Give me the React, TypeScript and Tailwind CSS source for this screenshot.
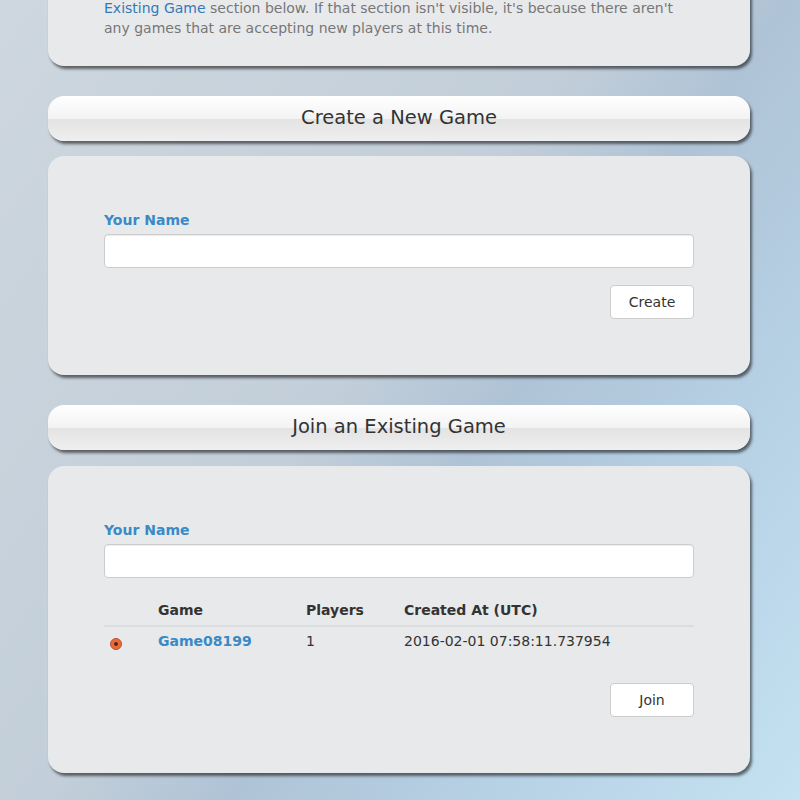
import React, { useState } from 'react';

const font = { fontFamily: '"DejaVu Sans", Verdana, sans-serif' };

const SectionHeader: React.FC<{ title: string }> = ({ title }) => (
  <div className="relative h-[45px] rounded-[16px] overflow-hidden shadow-[2px_3px_3px_rgba(0,0,0,0.55)] bg-[linear-gradient(to_bottom,#ffffff_0%,#f3f3f3_50%,#e3e3e3_51%,#efefef_100%)] flex items-center justify-center pb-[1px]">
    <h2 className="text-[19.5px] text-[#333] leading-none">{title}</h2>
  </div>
);

const Card: React.FC<{ children: React.ReactNode; className?: string }> = ({ children, className }) => (
  <div className={`bg-[#e8e9eb] rounded-[16px] shadow-[2px_3px_3px_rgba(0,0,0,0.55)] px-[56px] ${className || ''}`}>
    {children}
  </div>
);

const NameField: React.FC = () => (
  <div>
    <label className="block text-[14px] leading-[20px] font-bold text-[#3a8ac6] mb-[4px]">Your Name</label>
    <input
      type="text"
      className="block w-full h-[34px] bg-white border border-[#ccc] rounded-[4px] shadow-[inset_0_1px_1px_rgba(0,0,0,0.075)] px-3 text-[14px] outline-none"
    />
  </div>
);

const Button: React.FC<{ label: string }> = ({ label }) => (
  <button className="w-[84px] h-[34px] bg-white border border-[#ccc] rounded-[4px] text-[14px] text-[#333]">
    {label}
  </button>
);

const Radio: React.FC<{ checked: boolean }> = ({ checked }) => (
  <span className="inline-flex items-center justify-center w-[12px] h-[12px] rounded-full bg-[#e86b3c] border border-[#b9502b] mt-[3px]">
    {checked && <span className="w-[4px] h-[4px] rounded-full bg-[#5a2414]" />}
  </span>
);

export default function App() {
  const [selected] = useState('Game08199');
  const games = [{ name: 'Game08199', players: 1, created: '2016-02-01 07:58:11.737954' }];

  return (
    <div
      style={font}
      className="min-h-[800px] h-[800px] overflow-hidden bg-[linear-gradient(125deg,#ced7df_0%,#c2ced9_45%,#afc3d6_58%,#b6d0e4_76%,#c4e2f2_100%)] px-[48px] pr-[50px]"
    >
      <Card className="-mt-[40px] pt-[38px] pb-[28px]">
        <p className="text-[14px] leading-[20px] text-[#777] h-[40px]">
          <a className="text-[#337ab7]">Existing Game</a> section below. If that section isn't visible, it's because there aren't
          <br />
          any games that are accepting new players at this time.
        </p>
      </Card>

      <div className="mt-[30px]">
        <SectionHeader title="Create a New Game" />
      </div>
      <Card className="mt-[15px] pt-[54px] pb-[56px]">
        <NameField />
        <div className="flex justify-end mt-[17px]">
          <Button label="Create" />
        </div>
      </Card>

      <div className="mt-[30px]">
        <SectionHeader title="Join an Existing Game" />
      </div>
      <Card className="mt-[16px] pt-[54px] pb-[56px]">
        <NameField />
        <table className="w-full mt-[18px] text-[14px] leading-[20px] text-[#333] border-collapse">
          <thead>
            <tr className="border-b-2 border-[#dcdddf]">
              <th className="w-[54px] pt-1 pb-[5px]" />
              <th className="w-[148px] pt-1 pb-[5px] text-left font-bold">Game</th>
              <th className="w-[98px] pt-1 pb-[5px] text-left font-bold">Players</th>
              <th className="pt-1 pb-[5px] text-left font-bold">Created At (UTC)</th>
            </tr>
          </thead>
          <tbody>
            {games.map((g) => (
              <tr key={g.name}>
                <td className="pt-[4px] pb-[4px] pl-[6px] align-top">
                  <Radio checked={selected === g.name} />
                </td>
                <td className="pt-[4px] pb-[4px] font-bold text-[#3a8ac6]">{g.name}</td>
                <td className="pt-[4px] pb-[4px]">{g.players}</td>
                <td className="pt-[4px] pb-[4px]">{g.created}</td>
              </tr>
            ))}
          </tbody>
        </table>
        <div className="flex justify-end mt-[28px]">
          <Button label="Join" />
        </div>
      </Card>
    </div>
  );
}
